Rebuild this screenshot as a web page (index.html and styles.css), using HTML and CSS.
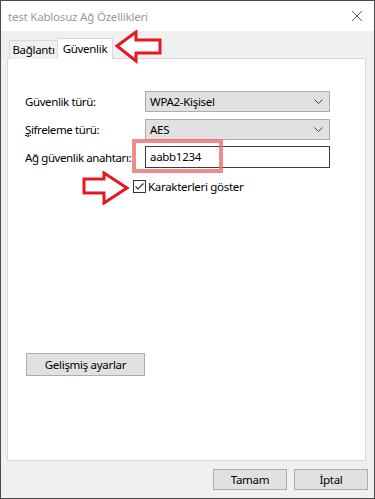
FILE: index.html
```html
<!DOCTYPE html>
<html lang="tr">
<head>
    <meta charset="UTF-8">
    <title>test Kablosuz Ağ Özellikleri</title>
    <link rel="stylesheet" href="styles.css">
</head>
<body>

    <!-- Title bar -->
    <div class="titlebar">
        <span class="title">test Kablosuz Ağ Özellikleri</span>
        <svg class="close" width="12" height="12" viewBox="0 0 12 12">
            <path d="M1 1 L11 11 M11 1 L1 11" stroke="#555" stroke-width="1" fill="none"/>
        </svg>
    </div>

    <div class="content">
        <!-- Tabs -->
        <div class="tabs">
            <div class="tab">Bağlantı</div>
            <div class="tab selected">Güvenlik</div>
        </div>

        <!-- Panel -->
        <div class="panel">
            <div class="row">
                <label class="label">Güvenlik türü:</label>
                <div class="select">
                    <span>WPA2-Kişisel</span>
                    <svg class="chevron" width="9" height="6" viewBox="0 0 9 6"><path d="M0.5 0.5 L4.5 4.5 L8.5 0.5" stroke="#444" fill="none"/></svg>
                </div>
            </div>
            <div class="row">
                <label class="label"><u>Ş</u>ifreleme türü:</label>
                <div class="select">
                    <span>AES</span>
                    <svg class="chevron" width="9" height="6" viewBox="0 0 9 6"><path d="M0.5 0.5 L4.5 4.5 L8.5 0.5" stroke="#444" fill="none"/></svg>
                </div>
            </div>
            <div class="row row-key">
                <label class="label">Ağ güvenlik anahtarı:</label>
                <div class="input">aabb1234</div>
            </div>
            <div class="check-row">
                <span class="checkbox">
                    <svg width="11" height="11" viewBox="0 0 11 11"><path d="M1.5 5.5 L4 8 L9.5 2.5" stroke="#333" stroke-width="1.2" fill="none"/></svg>
                </span>
                <span>Karakterleri göster</span>
            </div>

            <button class="btn btn-wide">Gelişmiş ayarlar</button>
        </div>

        <!-- Dialog buttons -->
        <div class="footer">
            <button class="btn">Tamam</button>
            <button class="btn">İptal</button>
        </div>
    </div>

    <!-- Annotations over the screenshot -->
    <div class="highlight"></div>
    <svg class="arrow arrow-tab" width="48" height="34" viewBox="0 0 48 34">
        <polygon points="2,16 21,2 21,10 45,10 45,23 21,23 21,31" fill="#fff" stroke="#e8161f" stroke-width="3" stroke-linejoin="miter"/>
    </svg>
    <svg class="arrow arrow-check" width="48" height="34" viewBox="0 0 48 34">
        <polygon points="2,8 22,8 22,2 45,17 22,32 22,22 2,22" fill="#fff" stroke="#e8161f" stroke-width="3" stroke-linejoin="miter"/>
    </svg>

</body>
</html>
```

FILE: styles.css
```css
/* Window */
* {
    box-sizing: border-box;
}

body {
    margin: 0;
    width: 375px;
    height: 499px;
    border: 1px solid #4b4b4b;
    background-color: #f0f0f0;
    font-family: "Noto Sans", "Open Sans", sans-serif;
    font-size: 11.5px;
    letter-spacing: -0.3px;
    color: #000;
    position: relative;
    overflow: hidden;
}

/* Title bar */
.titlebar {
    height: 30px;
    background-color: #fff;
    display: flex;
    align-items: center;
    justify-content: space-between;
    padding: 0 11px 0 7px;
}

.title {
    color: #9a9a9a;
    letter-spacing: -0.2px;
}

.content {
    padding: 7px 8px 0 6px;
}

/* Tabs */
.tabs {
    display: flex;
    align-items: flex-end;
    margin-left: 2px;
    margin-bottom: -1px;
}

.tab {
    width: 49px;
    height: 19px;
    border: 1px solid #d9d9d9;
    border-bottom: none;
    background-color: #f0f0f0;
    line-height: 17px;
    text-align: center;
}

.tab.selected {
    width: 56px;
    height: 21px;
    margin-left: -1px;
    line-height: 20px;
    background-color: #fff;
    position: relative;
    z-index: 1;
}

/* Panel */
.panel {
    height: 403px;
    border: 1px solid #d9d9d9;
    background-color: #fff;
    padding: 32px 0 0 17px;
    display: flex;
    flex-direction: column;
    align-items: flex-start;
}

.row {
    display: flex;
    align-items: center;
    margin-bottom: 7px;
}

.row-key {
    margin-top: -1px;
    margin-bottom: 0;
}

.label {
    width: 120px;
    letter-spacing: -0.4px;
}

.select {
    width: 185px;
    height: 21px;
    border: 1px solid #adadad;
    background-color: #e1e1e1;
    display: flex;
    align-items: center;
    justify-content: space-between;
    padding: 0 6px 0 4px;
}

.input {
    width: 185px;
    height: 22px;
    border: 1px solid #3c3c3c;
    background-color: #fff;
    padding: 0 4px;
    line-height: 20px;
}

.check-row {
    display: flex;
    align-items: center;
    height: 13px;
    margin: 12px 0 0 108px;
}

.checkbox {
    width: 13px;
    height: 13px;
    border: 1px solid #333;
    margin-right: 2px;
    display: flex;
    align-items: center;
    justify-content: center;
}

/* Buttons */
.btn {
    font-family: inherit;
    font-size: inherit;
    letter-spacing: inherit;
    color: #000;
    width: 74px;
    height: 21px;
    padding: 0;
    border: 1px solid #adadad;
    background-color: #e1e1e1;
}

.btn-wide {
    width: 119px;
    height: 23px;
    margin: 160px 0 0 1px;
}

.footer {
    display: flex;
    justify-content: flex-end;
    gap: 7px;
    margin-top: 8px;
    margin-right: -2px;
}

/* Annotations */
.highlight {
    position: absolute;
    left: 131px;
    top: 138px;
    width: 91px;
    height: 34px;
    border: 4px solid rgba(238, 110, 110, 0.8);
}

.arrow {
    position: absolute;
}

.arrow-tab {
    left: 114px;
    top: 29px;
}

.arrow-check {
    left: 81px;
    top: 170px;
}
```
